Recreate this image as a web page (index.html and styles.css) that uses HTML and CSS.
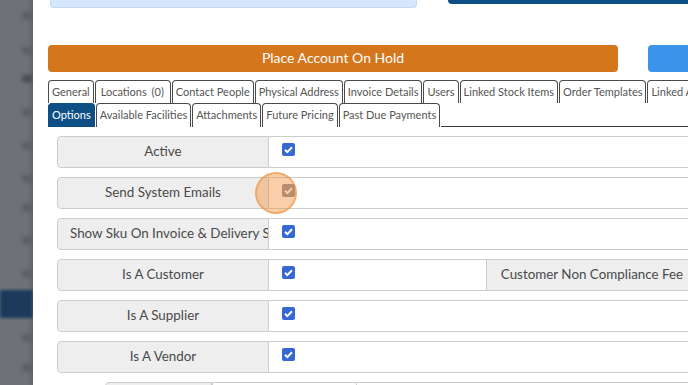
FILE: index.html
```html
<!DOCTYPE html>
<html lang="en">
<head>
    <meta charset="UTF-8" />
    <title>Customer Options</title>
    <link rel="stylesheet" href="styles.css">
</head>
<body>
    <div class="backdrop">
        <div class="blob b1"></div>
        <div class="blob b2"></div>
        <div class="blob b3 dark"></div>
        <div class="blob b4"></div>
        <div class="blob b5"></div>
        <div class="blob b6"></div>
        <div class="blob b7"></div>
        <div class="blob b8"></div>
        <div class="blob b9"></div>
        <div class="nav-active"></div>
        <div class="blob b10"></div>
        <div class="blob b11"></div>
    </div>

    <div class="modal">
        <div class="top-row">
            <div class="info-box"></div>
            <div class="top-bar"></div>
        </div>

        <div class="actions">
            <div class="btn btn-hold">Place Account On Hold</div>
            <div class="btn btn-blue"></div>
        </div>

        <div class="tabs">
            <div class="tab-row">
                <a href="#" class="tab">General</a>
                <a href="#" class="tab tab-locations">Locations (0)</a>
                <a href="#" class="tab">Contact People</a>
                <a href="#" class="tab">Physical Address</a>
                <a href="#" class="tab">Invoice Details</a>
                <a href="#" class="tab">Users</a>
                <a href="#" class="tab">Linked Stock Items</a>
                <a href="#" class="tab">Order Templates</a>
                <a href="#" class="tab">Linked Accounts</a>
            </div>
            <div class="tab-row">
                <a href="#" class="tab active">Options</a>
                <a href="#" class="tab">Available Facilities</a>
                <a href="#" class="tab">Attachments</a>
                <a href="#" class="tab">Future Pricing</a>
                <a href="#" class="tab">Past Due Payments</a>
                <div class="tab-fill"></div>
            </div>
        </div>

        <div class="options">
            <div class="opt-row">
                <div class="opt-label">Active</div>
                <div class="opt-value"><span class="check"><svg viewBox="0 0 13 13"><path d="M3 6.8l2.3 2.3L10 4.2" /></svg></span></div>
            </div>
            <div class="opt-row">
                <div class="opt-label">Send System Emails</div>
                <div class="opt-value">
                    <span class="check disabled"><svg viewBox="0 0 13 13"><path d="M3 6.8l2.3 2.3L10 4.2" /></svg></span>
                    <span class="click-marker"></span>
                </div>
            </div>
            <div class="opt-row">
                <div class="opt-label">Show Sku On Invoice &amp; Delivery Slips</div>
                <div class="opt-value"><span class="check"><svg viewBox="0 0 13 13"><path d="M3 6.8l2.3 2.3L10 4.2" /></svg></span></div>
            </div>
            <div class="opt-row">
                <div class="opt-label">Is A Customer</div>
                <div class="opt-value short"><span class="check"><svg viewBox="0 0 13 13"><path d="M3 6.8l2.3 2.3L10 4.2" /></svg></span></div>
                <div class="opt-label second">Customer Non Compliance Fee</div>
            </div>
            <div class="opt-row">
                <div class="opt-label">Is A Supplier</div>
                <div class="opt-value"><span class="check"><svg viewBox="0 0 13 13"><path d="M3 6.8l2.3 2.3L10 4.2" /></svg></span></div>
            </div>
            <div class="opt-row">
                <div class="opt-label">Is A Vendor</div>
                <div class="opt-value"><span class="check"><svg viewBox="0 0 13 13"><path d="M3 6.8l2.3 2.3L10 4.2" /></svg></span></div>
            </div>
            <div class="opt-row partial">
                <div class="opt-label narrow"></div>
                <div class="opt-value mid"></div>
                <div class="opt-value"></div>
            </div>
        </div>
    </div>
</body>
</html>
```

FILE: styles.css
```css
* {
    margin: 0;
    padding: 0;
    box-sizing: border-box;
    font-family: Lato, "Open Sans", sans-serif;
}
body {
    display: flex;
    height: 385px;
    overflow: hidden;
    background-color: #fff;
}

/* blurred page behind the modal */
.backdrop {
    width: 33px;
    flex-shrink: 0;
    background: #6e7277;
    display: flex;
    flex-direction: column;
    overflow: hidden;
}
.blob {
    margin-left: 22px;
    width: 11px;
    height: 7px;
    background: #595d62;
    filter: blur(2px);
    border-radius: 3px;
}
.blob.dark { background: #45494e; }
.b1 { margin-top: 12px; }
.b2 { margin-top: 28px; }
.b3 { margin-top: 21px; }
.b4 { margin-top: 27px; }
.b5 { margin-top: 26px; }
.b6 { margin-top: 26px; }
.b7 { margin-top: 22px; }
.b8 { margin-top: 26px; }
.b9 { margin-top: 26px; }
.nav-active {
    margin-top: 13px;
    height: 28px;
    background: #1c3b5c;
    filter: blur(1.5px);
}
.b10 { margin-top: 16px; }
.b11 { margin-top: 23px; }

.modal {
    flex: 1;
    background: #fff;
    overflow: hidden;
    box-shadow: -2px 0 4px rgba(0, 0, 0, 0.15);
}

.top-row { display: flex; height: 8px; }
.info-box {
    margin-left: 17px;
    width: 367px;
    height: 8px;
    background: #d5e8fb;
    border: 1px solid #c3d9f1;
    border-top: none;
    border-radius: 0 0 4px 4px;
}
.top-bar {
    margin-left: 31px;
    flex: 1;
    height: 4px;
    background: #0d4e88;
    border-radius: 0 0 0 4px;
}

.actions {
    display: flex;
    margin-top: 37px;
    padding-left: 15px;
}
.btn {
    flex-shrink: 0;
    height: 27px;
    line-height: 26px;
    border-radius: 4px;
    color: #fff;
    font-size: 14px;
    text-align: center;
}
.btn-hold { width: 570px; background: #d4771c; }
.btn-blue { width: 60px; margin-left: 30px; background: #3b93ea; }

.tabs {
    margin-top: 8px;
    padding-left: 15px;
}
.tab-row {
    display: flex;
    gap: 1px;
    white-space: nowrap;
    overflow: hidden;
}
.tab {
    display: block;
    flex-shrink: 0;
    height: 23px;
    line-height: 21px;
    padding: 0 3px;
    border: 1px solid #4a4a4a;
    border-bottom: none;
    border-radius: 4px 4px 0 0;
    font-size: 11px;
    color: #555;
    text-decoration: none;
}
.tab-locations { padding: 0 6px 0 5px; word-spacing: 2px; }
.tab-row + .tab-row .tab { height: 24px; line-height: 22px; }
.tab.active {
    background: #0e4f86;
    border-color: #0e4f86;
    color: #fff;
}
.tab-fill {
    flex: 1;
    border-bottom: 1px solid #3a3a3a;
}

.options {
    width: 720px;
    margin-top: 9px;
    padding-left: 24px;
    display: flex;
    flex-direction: column;
    gap: 9px;
}
.opt-row {
    display: flex;
    height: 32px;
}
.opt-label {
    flex: 0 0 212px;
    background: #eee;
    border: 1px solid #ccc;
    border-radius: 4px 0 0 4px;
    padding: 0 12px;
    line-height: 29px;
    font-size: 13.4px;
    color: #4a4a4a;
    text-align: center;
    white-space: nowrap;
    overflow: hidden;
}
.opt-label.second { border-radius: 0; }
.opt-value {
    flex: 1;
    position: relative;
    border-top: 1px solid #ccc;
    border-bottom: 1px solid #ccc;
    padding: 6px 0 0 13px;
}
.opt-value.short { flex: 0 0 217px; }
.opt-row.partial { margin-left: 48px; }
.opt-label.narrow { flex: 0 0 107px; }
.opt-value.mid { flex: 0 0 145px; border-right: 1px solid #ccc; border-left: 1px solid #ccc; }

.check {
    display: block;
    width: 13px;
    height: 13px;
    background: #3568d2;
    border-radius: 2px;
}
.check svg {
    display: block;
    width: 13px;
    height: 13px;
    fill: none;
    stroke: #fff;
    stroke-width: 2;
}
.check.disabled { background: #8e8d9c; }

/* click highlight from the recording */
.click-marker {
    position: absolute;
    left: -14px;
    top: -6px;
    width: 42px;
    height: 42px;
    border-radius: 50%;
    background: rgba(240, 140, 50, 0.42);
    border: 2px solid rgba(236, 140, 60, 0.55);
}
```
